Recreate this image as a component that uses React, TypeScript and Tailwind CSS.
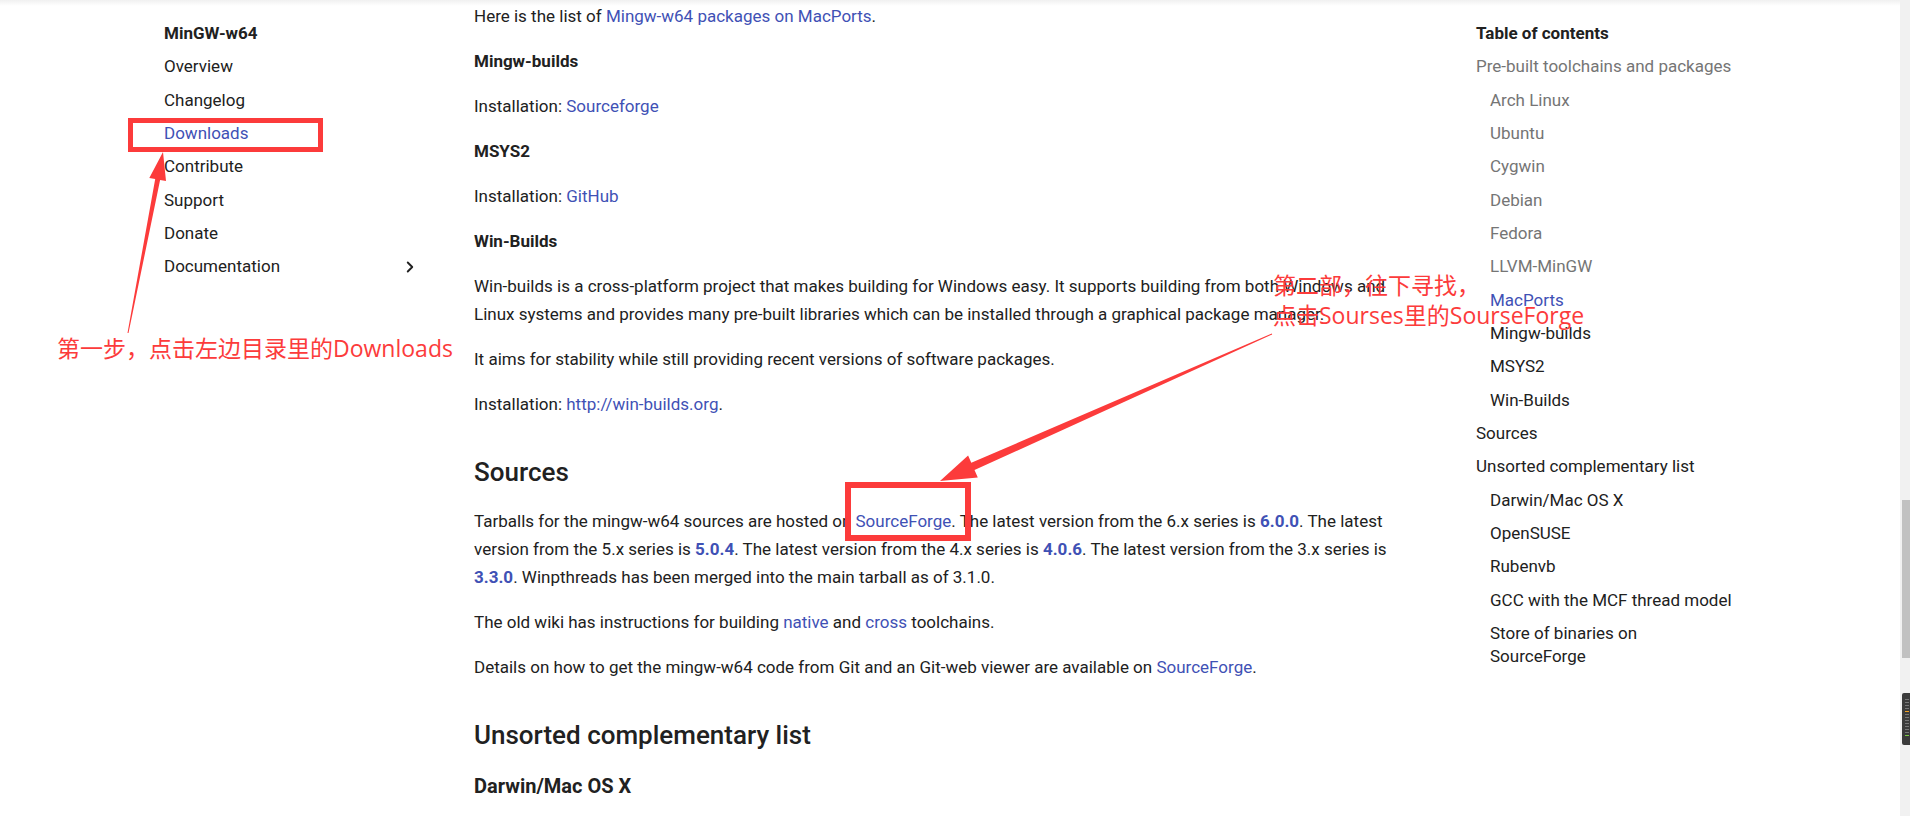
import { ChevronRight } from "lucide-react";

const sideItems = ["Overview", "Changelog", "Downloads", "Contribute", "Support", "Donate"];

type TocItem = { label: string; sub?: boolean; tone: "grey" | "blue" | "dark" };

const tocItems: TocItem[] = [
  { label: "Pre-built toolchains and packages", tone: "grey" },
  { label: "Arch Linux", sub: true, tone: "grey" },
  { label: "Ubuntu", sub: true, tone: "grey" },
  { label: "Cygwin", sub: true, tone: "grey" },
  { label: "Debian", sub: true, tone: "grey" },
  { label: "Fedora", sub: true, tone: "grey" },
  { label: "LLVM-MinGW", sub: true, tone: "grey" },
  { label: "MacPorts", sub: true, tone: "blue" },
  { label: "Mingw-builds", sub: true, tone: "dark" },
  { label: "MSYS2", sub: true, tone: "dark" },
  { label: "Win-Builds", sub: true, tone: "dark" },
  { label: "Sources", tone: "dark" },
  { label: "Unsorted complementary list", tone: "dark" },
  { label: "Darwin/Mac OS X", sub: true, tone: "dark" },
  { label: "OpenSUSE", sub: true, tone: "dark" },
  { label: "Rubenvb", sub: true, tone: "dark" },
  { label: "GCC with the MCF thread model", sub: true, tone: "dark" },
  { label: "Store of binaries on SourceForge", sub: true, tone: "dark" },
];

const toneClass = {
  grey: "text-[#757575]",
  blue: "text-[#3f51b5]",
  dark: "text-[#212121]",
};

const A = ({ children, bold }: { children: React.ReactNode; bold?: boolean }) => (
  <a className={`text-[#3f51b5] ${bold ? "font-bold" : ""}`}>{children}</a>
);

// arrow polygon from tail to tip, tapering shaft
function arrowPoints(
  x1: number,
  y1: number,
  x2: number,
  y2: number,
  w1: number,
  w2: number,
  headLen: number,
  headW: number
) {
  const dx = x2 - x1;
  const dy = y2 - y1;
  const len = Math.hypot(dx, dy);
  const ux = dx / len;
  const uy = dy / len;
  const nx = -uy;
  const ny = ux;
  const bx = x2 - ux * headLen;
  const by = y2 - uy * headLen;
  const pts = [
    [x1 + (nx * w1) / 2, y1 + (ny * w1) / 2],
    [bx + (nx * w2) / 2, by + (ny * w2) / 2],
    [bx + (nx * headW) / 2, by + (ny * headW) / 2],
    [x2, y2],
    [bx - (nx * headW) / 2, by - (ny * headW) / 2],
    [bx - (nx * w2) / 2, by - (ny * w2) / 2],
    [x1 - (nx * w1) / 2, y1 - (ny * w1) / 2],
  ];
  return pts.map((p) => `${p[0].toFixed(1)},${p[1].toFixed(1)}`).join(" ");
}

export default function App() {
  return (
    <div className="relative h-[816px] w-full overflow-hidden bg-white font-['Roboto',sans-serif] text-[17px] text-[#212121]">
      <div className="flex h-full">
        {/* LEFT NAV */}
        <aside className="ml-[164px] w-[256px] shrink-0 pt-[17px]">
          <div className="py-[5px] leading-[23.33px] font-bold">MinGW-w64</div>
          {sideItems.map((item) => (
            <div
              key={item}
              className={`py-[5px] leading-[23.33px] ${item === "Downloads" ? "text-[#3f51b5]" : ""}`}
            >
              {item}
            </div>
          ))}
          <div className="flex items-center justify-between py-[5px] leading-[23.33px]">
            <span>Documentation</span>
            <ChevronRight className="mr-[1px] h-[18px] w-[18px]" strokeWidth={2.5} />
          </div>
        </aside>

        {/* CONTENT */}
        <main className="ml-[54px] w-[930px] shrink-0 pt-[2px] leading-7">
          <p className="mb-[17px]">
            Here is the list of <A>Mingw-w64 packages on MacPorts</A>.
          </p>
          <h4 className="mb-[17px] font-bold">Mingw-builds</h4>
          <p className="mb-[17px]">
            Installation: <A>Sourceforge</A>
          </p>
          <h4 className="mb-[17px] font-bold">MSYS2</h4>
          <p className="mb-[17px]">
            Installation: <A>GitHub</A>
          </p>
          <h4 className="mb-[17px] font-bold">Win-Builds</h4>
          <p className="mb-[17px]">
            Win-builds is a cross-platform project that makes building for Windows easy. It supports building from both
            Windows and Linux systems and provides many pre-built libraries which can be installed through a graphical
            package manager.
          </p>
          <p className="mb-[17px]">It aims for stability while still providing recent versions of software packages.</p>
          <p className="mb-[36px]">
            Installation: <A>http://win-builds.org</A>.
          </p>

          <h2 className="mb-[17px] text-[26px] leading-9 font-medium">Sources</h2>
          <p className="mb-[17px]">
            Tarballs for the mingw-w64 sources are hosted on <A>SourceForge</A>. The latest version from the 6.x series
            is <A bold>6.0.0</A>. The latest version from the 5.x series is <A bold>5.0.4</A>. The latest version from
            the 4.x series is <A bold>4.0.6</A>. The latest version from the 3.x series is <A bold>3.3.0</A>.
            Winpthreads has been merged into the main tarball as of 3.1.0.
          </p>
          <p className="mb-[17px]">
            The old wiki has instructions for building <A>native</A> and <A>cross</A> toolchains.
          </p>
          <p className="mb-[36px]">
            Details on how to get the mingw-w64 code from Git and an Git-web viewer are available on{" "}
            <A>SourceForge</A>.
          </p>

          <h2 className="mb-[17px] text-[26px] leading-9 font-medium">Unsorted complementary list</h2>
          <h3 className="pt-[2px] text-[20px] leading-7 font-bold">Darwin/Mac OS X</h3>
        </main>

        {/* TABLE OF CONTENTS */}
        <nav className="ml-[72px] w-[258px] shrink-0 pt-[17px]">
          <div className="py-[5px] leading-[23.33px] font-bold">Table of contents</div>
          {tocItems.map((t) => (
            <div
              key={t.label}
              className={`py-[5px] leading-[23.33px] ${t.sub ? "pl-[14px]" : ""} ${toneClass[t.tone]}`}
            >
              {t.label}
            </div>
          ))}
        </nav>

        {/* SCROLLBAR */}
        <div className="ml-auto flex w-[10px] shrink-0 flex-col items-end bg-[#f1f1f1]">
          <div className="mt-[500px] h-[158px] w-[8px] bg-[#c1c1c1]" />
        </div>
      </div>

      {/* header shadow */}
      <div className="pointer-events-none absolute top-0 right-[10px] left-0 h-[6px] bg-gradient-to-b from-[#0000000f] to-transparent" />

      {/* small side widget over scrollbar */}
      <div className="absolute top-[693px] right-0 flex h-[52px] w-[8px] flex-col items-end gap-[2px] rounded-l-[2px] bg-[#3b3b3b] py-[6px] pr-[1px]">
        {Array.from({ length: 13 }).map((_, i) => (
          <div
            key={i}
            className={`h-[1px] w-[4px] ${i === 4 ? "bg-[#f0a020]" : i === 12 ? "bg-[#7ac943]" : "bg-[#777777]"}`}
          />
        ))}
      </div>

      {/* ANNOTATIONS */}
      <div className="pointer-events-none absolute top-[118px] left-[128px] h-[34px] w-[195px] border-[5px] border-[#fc3b3b]" />
      <div className="pointer-events-none absolute top-[482px] left-[845px] h-[59px] w-[126px] border-[6px] border-[#fc3b3b]" />

      <svg className="pointer-events-none absolute inset-0" width="1910" height="816">
        <polygon points={arrowPoints(128, 333, 163, 152, 1, 5, 28, 17)} fill="#fc3b3b" />
        <polygon points={arrowPoints(1272, 334, 940, 481, 1, 8, 36, 24)} fill="#fc3b3b" />
      </svg>

      <div className="pointer-events-none absolute top-[333px] left-[57px] font-['Open_Sans','Noto_Sans_CJK_SC',sans-serif] text-[23px] leading-[30px] text-[#fc3b3b]">
        第一步，点击左边目录里的Downloads
      </div>
      <div className="pointer-events-none absolute top-[270px] left-[1273px] font-['Open_Sans','Noto_Sans_CJK_SC',sans-serif] text-[23px] leading-[30px] text-[#fc3b3b]">
        <div>第二部，往下寻找，</div>
        <div>点击Sourses里的SourseForge</div>
      </div>
    </div>
  );
}
